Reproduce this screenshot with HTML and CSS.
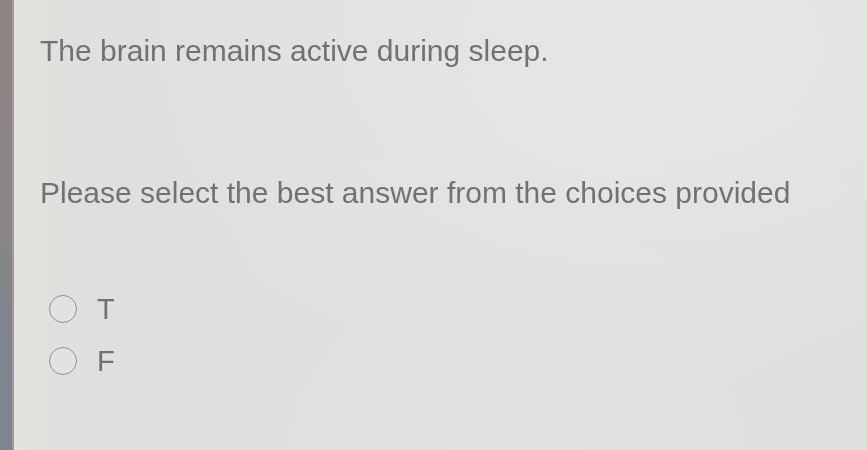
FILE: index.html
```html
<!DOCTYPE html>
<html lang="en">
<head>
    <meta charset="UTF-8">
    <meta name="viewport" content="width=device-width, initial-scale=1.0">
    <title>Question</title>
    <link rel="stylesheet" href="styles.css">
</head>
<body>
    <div class="page">
        <div class="edge"></div>
        <main class="quiz">
            <p class="question">The brain remains active during sleep.</p>
            <p class="prompt">Please select the best answer from the choices provided</p>
            <div class="choices">
                <label class="choice"><input type="radio" name="answer" value="T"> T</label>
                <label class="choice"><input type="radio" name="answer" value="F"> F</label>
            </div>
        </main>
    </div>
</body>
</html>
```

FILE: styles.css
```css
/* Global Styles */
html, body {
    margin: 0;
    padding: 0;
    height: 100%;
}

body {
    font-family: "Liberation Sans", Arial, sans-serif;
    background: #dfe0de;
    color: #707175;
    overflow: hidden;
}

.page {
    display: flex;
    height: 100%;
    background:
        radial-gradient(ellipse at 75% 10%, #e7e8e6 0%, rgba(231, 232, 230, 0) 60%),
        radial-gradient(ellipse at 60% 100%, #e1e2e0 0%, rgba(225, 226, 224, 0) 70%),
        linear-gradient(90deg, #e3e4dc 0px, #dfe0dd 60px, #dedfdd 100%);
}

/* Dark strip down the left */
.edge {
    width: 14px;
    flex-shrink: 0;
    background: linear-gradient(180deg, #8b8583 0%, #898585 45%, #7f858c 75%, #7d8590 100%);
    box-shadow: inset -2px 0 0 #a8969a;
}

/* Question */
.quiz {
    flex: 1;
    padding: 34px 0 0 26px;
    filter: blur(0.4px);
}

.question,
.prompt {
    margin: 0;
    font-size: 30px;
    line-height: 34px;
    white-space: nowrap;
}

.prompt {
    margin-top: 108px;
}

/* Answers */
.choices {
    display: flex;
    flex-direction: column;
    gap: 18px;
    margin-top: 82px;
    padding-left: 9px;
}

.choice {
    display: flex;
    align-items: center;
    gap: 20px;
    height: 34px;
    font-size: 29px;
    line-height: 34px;
}

.choice input {
    appearance: none;
    -webkit-appearance: none;
    margin: 0;
    width: 28px;
    height: 28px;
    border: 1.5px solid #8e8f92;
    border-radius: 50%;
    background: #e2e3e1;
}
```
